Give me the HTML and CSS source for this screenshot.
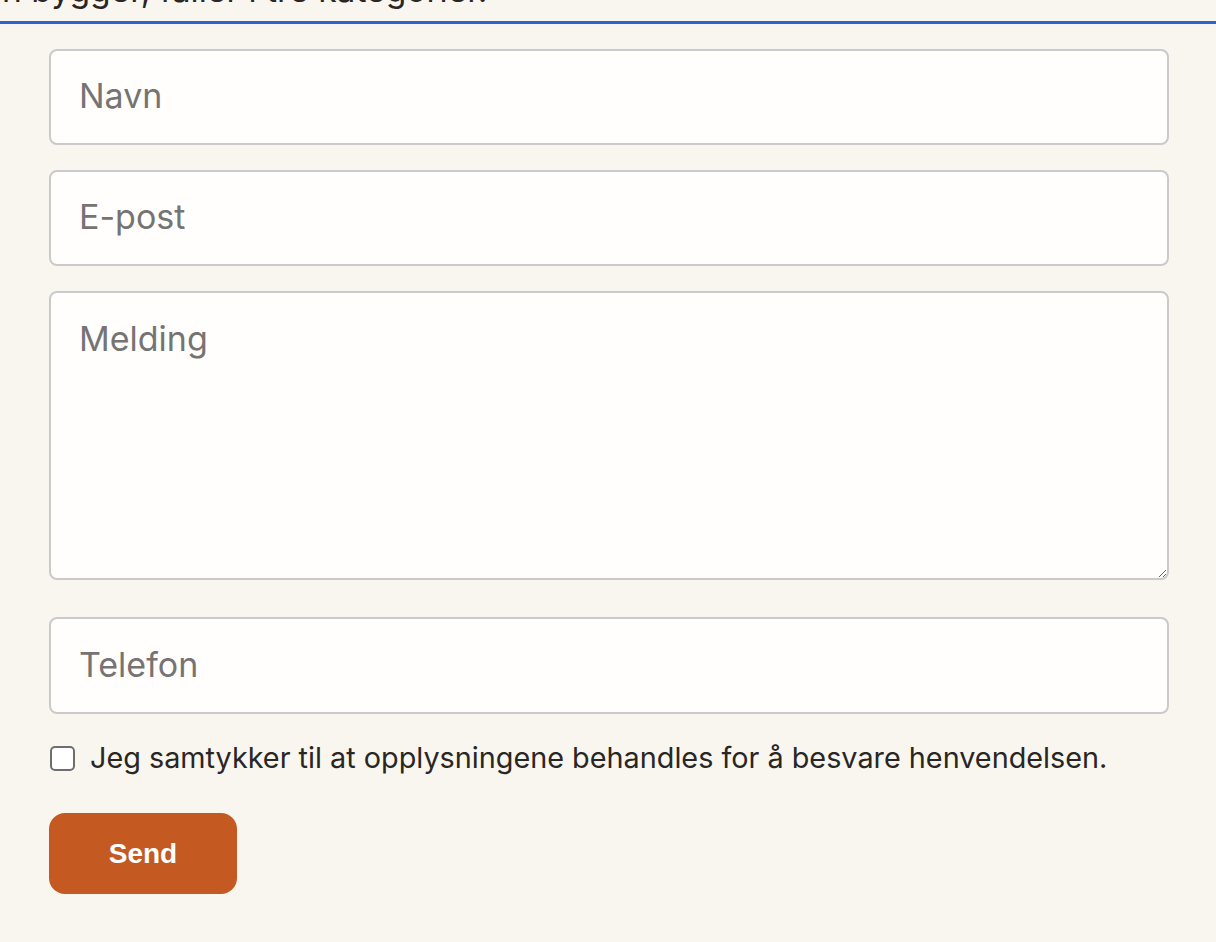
FILE: index.html
```html
<!DOCTYPE html>
<html lang="no">
<head>
<meta charset="utf-8">
<title>Kontakt</title>
<link rel="stylesheet" href="styles.css">
</head>
<body>
<div class="intro"><p class="intro-text">n bygger, faller i tre kategorier.</p></div>
<form class="contact-form">
  <input class="field" type="text" placeholder="Navn">
  <input class="field" type="email" placeholder="E-post">
  <textarea class="field field-area" placeholder="Melding"></textarea>
  <input class="field field-phone" type="tel" placeholder="Telefon">
  <label class="consent"><input class="consent-box" type="checkbox"><span>Jeg samtykker til at opplysningene behandles for å besvare henvendelsen.</span></label>
  <button class="send" type="submit">Send</button>
</form>
</body>
</html>
```
FILE: styles.css
```css
html, body {
  margin: 0;
  padding: 0;
  background: #f9f6f0;
  font-family: Inter, "Noto Sans", sans-serif;
  color: #2a2623;
}
.intro {
  border-bottom: 3px solid #3064cc;
  padding-bottom: 11px;
  margin-top: -30px;
  overflow: hidden;
}
.intro-text {
  margin: 0 0 0 2px;
  font-size: 33.6px;
  line-height: 40px;
  white-space: nowrap;
}
.contact-form {
  display: flex;
  flex-direction: column;
  align-items: flex-start;
  width: 1120px;
  margin: 25px 0 0 49px;
}
.field {
  box-sizing: border-box;
  width: 100%;
  height: 96px;
  margin: 0 0 25px 0;
  padding: 0 28px 3px;
  border: 2px solid #cbcaca;
  border-radius: 8px;
  background: #fffefc;
  font-family: Inter, "Noto Sans", sans-serif;
  font-size: 34px;
  color: #2a2623;
  outline: none;
}
.field::placeholder {
  color: #757473;
  opacity: 1;
}
.field-area {
  height: 289px;
  padding-top: 24px;
  margin-bottom: 37px;
  resize: vertical;
  line-height: 44px;
}
.field-phone {
  height: 97px;
  margin-bottom: 26px;
}
.consent {
  display: flex;
  align-items: center;
  gap: 15px;
  font-size: 28.8px;
  line-height: 36px;
  color: #2a2623;
}
.consent-box {
  appearance: none;
  box-sizing: border-box;
  width: 25px;
  height: 25px;
  margin: 0 0 0 1px;
  border: 2px solid #6e6e6e;
  border-radius: 5px;
  background: #fff;
}
.send {
  margin-top: 37px;
  width: 188px;
  height: 81px;
  border: none;
  border-radius: 16px;
  background: #c45a21;
  color: #fff;
  font-family: "Liberation Sans", Arial, sans-serif;
  font-weight: bold;
  font-size: 28px;
}
```
